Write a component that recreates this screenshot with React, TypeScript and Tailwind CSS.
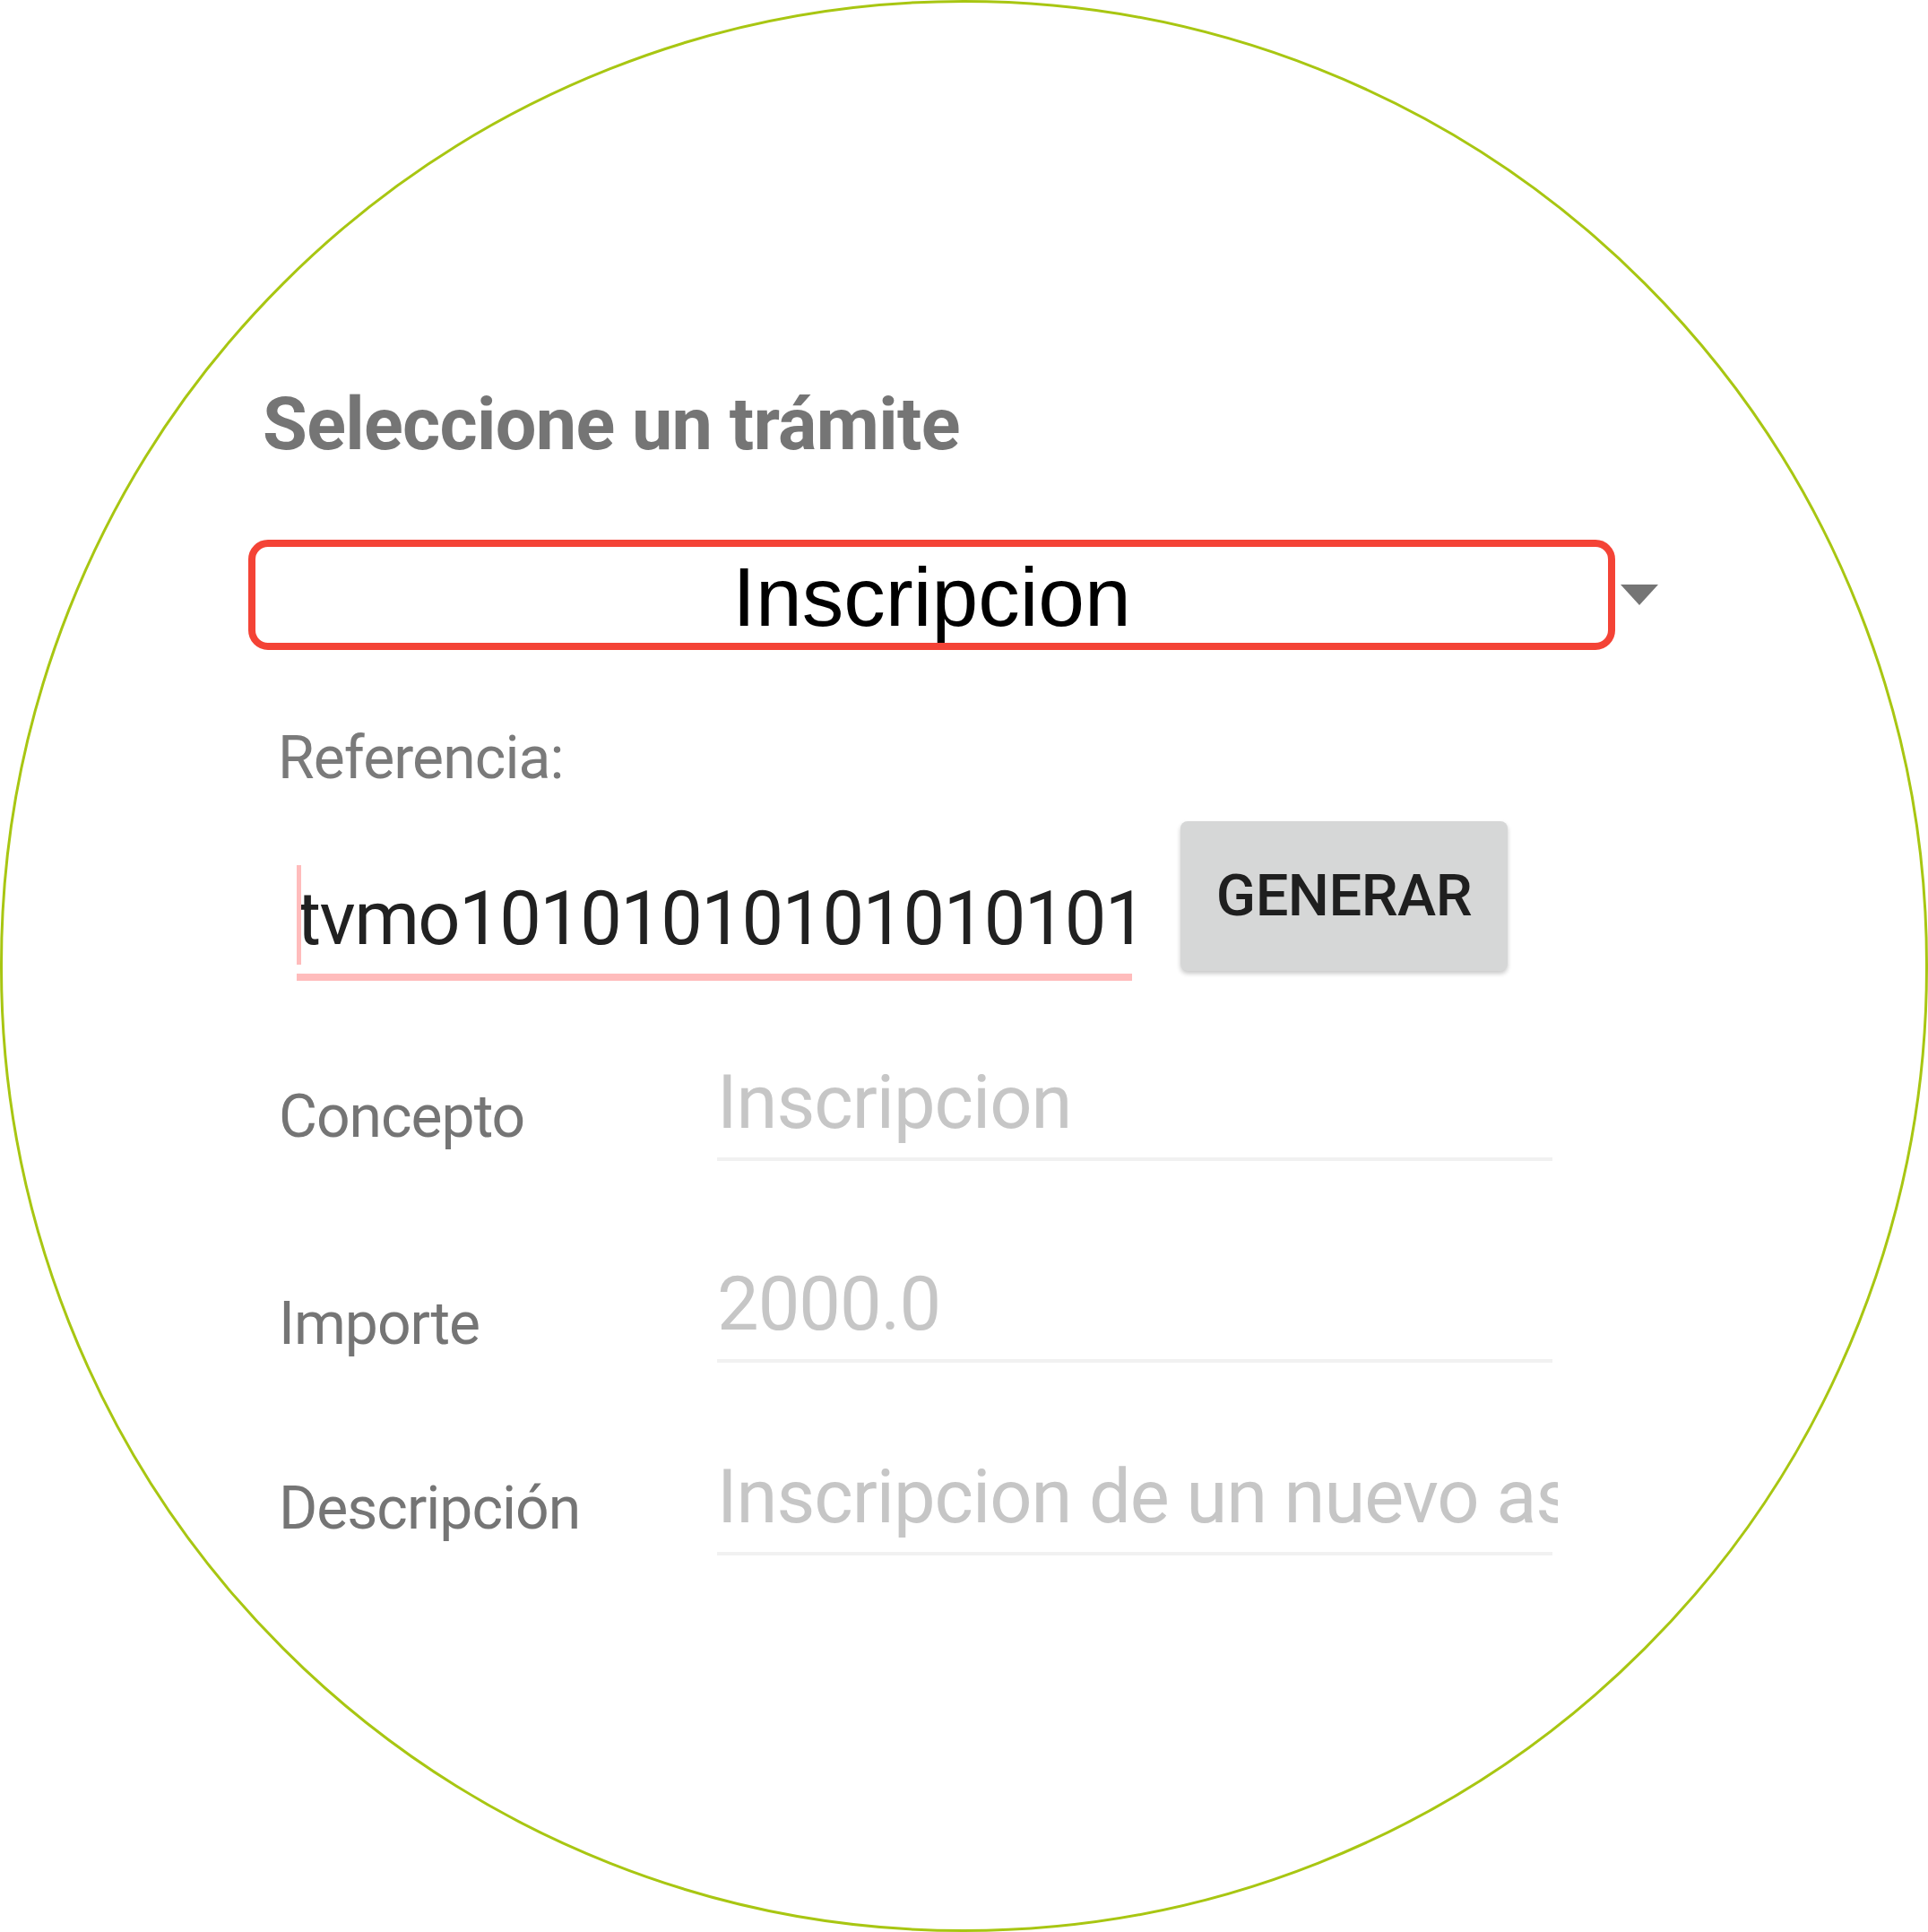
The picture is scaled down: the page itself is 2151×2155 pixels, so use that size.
import React from "react";

const roboto = { fontFamily: "Roboto, 'Noto Sans', sans-serif" };

function FieldRow({
  label,
  value,
  labelPad,
  className,
}: {
  label: string;
  value: string;
  labelPad: string;
  className?: string;
}) {
  return (
    <div className={`ml-[34px] flex items-start ${className ?? ""}`}>
      <div
        className={`w-[489px] shrink-0 text-[66px] leading-[66px] tracking-[-1px] text-[#757575] ${labelPad}`}
      >
        {label}
      </div>
      <div className="flex w-[938px] flex-col">
        <div className="-mt-[10px] overflow-hidden whitespace-nowrap text-[83px] leading-[104px] tracking-[-1px] text-[#c6c6c6]">
          {value}
        </div>
        <div className="mt-[9px] h-[4px] w-[932px] bg-[#f1f1f1]" />
      </div>
    </div>
  );
}

export default function App() {
  return (
    <div className="h-[2155px] w-[2151px] bg-white" style={roboto}>
      <div className="h-full w-full rounded-full border-[3px] border-[#a8c612] pl-[274px] pt-[430px]">
        <h1 className="ml-[16px] text-[81px] font-bold leading-[81px] tracking-[-0.7px] text-[#757575]">
          Seleccione un trámite
        </h1>

        <div className="mt-[88px] flex items-center gap-[6px]">
          <div className="flex h-[123px] w-[1525px] items-start justify-center rounded-[22px] border-[8px] border-[#f44336] pt-[10px]">
            <span
              className="text-[93px] leading-[93px] text-black"
              style={{ fontFamily: "'Liberation Sans', Arial, sans-serif" }}
            >
              Inscripcion
            </span>
          </div>
          <svg width="42" height="23" viewBox="0 0 42 23">
            <polygon points="0,0 42,0 21,23" fill="#757575" />
          </svg>
        </div>

        <div className="ml-[33px] mt-[88px] text-[66px] leading-[66px] tracking-[-0.9px] text-[#7a7a7a]">
          Referencia:
        </div>

        <div className="ml-[54px] mt-[37px] flex items-start gap-[47px]">
          <div className="relative flex w-[939px] flex-col pt-[67px]">
            <div className="overflow-hidden whitespace-nowrap text-[83px] leading-[83px] tracking-[-1.6px] text-[#212121]">
              tvmo10101010101010101010101
            </div>
            <div className="mt-[20px] h-[8px] w-[932px] bg-[#ffbcbc]" />
            <div className="absolute left-0 top-[49px] h-[111px] w-[5px] bg-[#ffbcbc]" />
          </div>
          <button className="flex h-[167px] w-[365px] items-center justify-center rounded-[8px] bg-[#d6d7d7] text-[65px] font-medium leading-none tracking-[-0.5px] text-[#1f1f1f] shadow-[0_3px_5px_rgba(0,0,0,0.22)]">
            GENERAR
          </button>
        </div>

        <FieldRow
          className="mt-[94px]"
          label="Concepto"
          value="Inscripcion"
          labelPad="pt-[25px]"
        />
        <FieldRow
          className="mt-[118px]"
          label="Importe"
          value="2000.0"
          labelPad="pt-[31px]"
        />
        <FieldRow
          className="mt-[108px]"
          label="Descripción"
          value="Inscripcion de un nuevo asociado"
          labelPad="pt-[22px]"
        />
      </div>
    </div>
  );
}
